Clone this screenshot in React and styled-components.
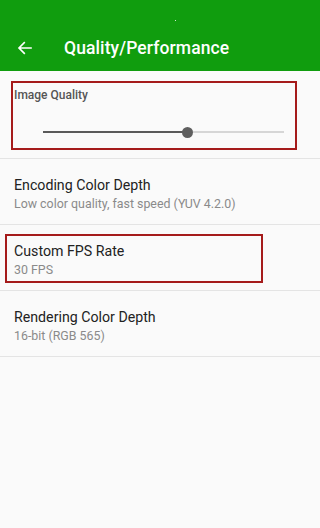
import React from "react";
import styled, { createGlobalStyle } from "styled-components";

const Global = createGlobalStyle`
  html, body { margin: 0; padding: 0; background: #fafafa; }
  body { font-family: Roboto, "Noto Sans", sans-serif; }
`;

const Screen = styled.div`
  width: 320px;
  min-height: 528px;
  background: #fafafa;
`;

const AppBar = styled.header`
  background: #109d0e;
  color: #fff;
`;

const StatusBar = styled.div`
  height: 24px;
  display: flex;
  justify-content: center;
  align-items: flex-end;
  padding-bottom: 3px;
  box-sizing: border-box;
`;

const Dot = styled.span`
  width: 1px;
  height: 1px;
  margin-left: 30px;
  background: #cfeccf;
`;

const Toolbar = styled.div`
  height: 47px;
  display: flex;
  align-items: center;
  padding-left: 16px;
`;

const BackButton = styled.button`
  border: 0;
  background: none;
  padding: 0;
  width: 18px;
  height: 18px;
  display: flex;
  color: #fff;
  margin-right: 30px;
`;

const Title = styled.h1`
  margin: 0;
  font-size: 17.5px;
  font-weight: 500;
  letter-spacing: 0.1px;
`;

const Section = styled.section`
  position: relative;
  height: 88px;
  border-bottom: 1px solid #e4e4e4;
  box-sizing: border-box;
  padding: 17px 14px 0;
`;

const SectionLabel = styled.div`
  font-size: 12px;
  font-weight: 500;
  color: #555;
`;

const Slider = styled.div`
  position: relative;
  margin: 29px 0 0 29px;
  width: 241px;
  height: 2px;
  background: #d6d6d6;
`;

const Fill = styled.div`
  height: 2px;
  background: #5a5a5a;
`;

const Thumb = styled.div`
  position: absolute;
  top: -4.5px;
  width: 11px;
  height: 11px;
  margin-left: -5.5px;
  border-radius: 50%;
  background: #5f5f5f;
`;

const Row = styled.div`
  position: relative;
  height: 66px;
  box-sizing: border-box;
  border-bottom: 1px solid #e4e4e4;
  padding: 4px 14px 0;
  display: flex;
  flex-direction: column;
  justify-content: center;
`;

const RowTitle = styled.div`
  font-size: 14.2px;
  color: #222;
  line-height: 19px;
`;

const RowSub = styled.div`
  font-size: 12.4px;
  color: #8a8a8a;
  line-height: 17px;
`;

const Highlight = styled.div`
  position: absolute;
  top: ${(p) => p.$top}px;
  left: ${(p) => p.$left}px;
  width: ${(p) => p.$w}px;
  height: ${(p) => p.$h}px;
  border: 2px solid #a51b1b;
  box-sizing: border-box;
  pointer-events: none;
`;

const rows = [
  { title: "Encoding Color Depth", sub: "Low color quality, fast speed (YUV 4.2.0)" },
  { title: "Custom FPS Rate", sub: "30 FPS", mark: true },
  { title: "Rendering Color Depth", sub: "16-bit (RGB 565)" },
];

export default function App() {
  const value = 0.6;
  return (
    <>
      <Global />
      <Screen>
        <AppBar>
          <StatusBar>
            <Dot />
          </StatusBar>
          <Toolbar>
            <BackButton aria-label="back">
              <svg width="18" height="18" viewBox="0 0 24 24" fill="none" stroke="currentColor" strokeWidth="2.2" strokeLinecap="square">
                <path d="M20 12H5M11 5l-7 7 7 7" />
              </svg>
            </BackButton>
            <Title>Quality/Performance</Title>
          </Toolbar>
        </AppBar>

        <Section>
          <SectionLabel>Image Quality</SectionLabel>
          <Slider>
            <Fill style={{ width: `${value * 100}%` }} />
            <Thumb style={{ left: `${value * 100}%` }} />
          </Slider>
          <Highlight $top={10} $left={11} $w={286} $h={69} />
        </Section>

        {rows.map((r) => (
          <Row key={r.title}>
            <RowTitle>{r.title}</RowTitle>
            <RowSub>{r.sub}</RowSub>
            {r.mark && <Highlight $top={9} $left={5} $w={258} $h={49} />}
          </Row>
        ))}
      </Screen>
    </>
  );
}
